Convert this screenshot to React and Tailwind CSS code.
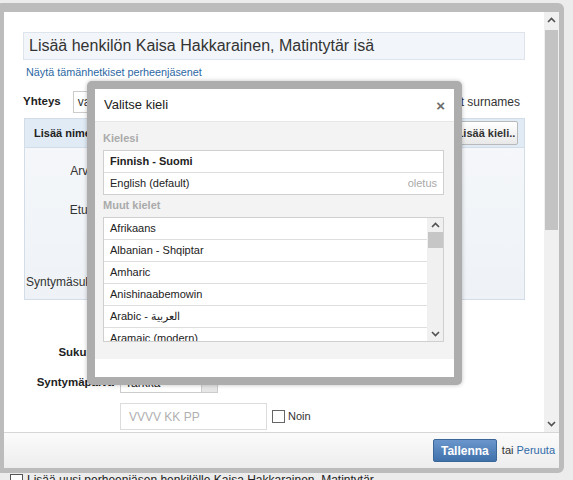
const LANGS = [
  "Afrikaans",
  "Albanian - Shqiptar",
  "Amharic",
  "Anishinaabemowin",
  "Arabic - العربية",
  "Aramaic (modern)",
  "Armenian",
];

function Chevron({ up }) {
  return (
    <svg width="9" height="6" viewBox="0 0 9 6" className="block">
      <polyline
        points={up ? "1,5 4.5,1.5 8,5" : "1,1 4.5,4.5 8,1"}
        fill="none"
        stroke="#505050"
        strokeWidth="1.6"
      />
    </svg>
  );
}

function LanguageDialog() {
  return (
    <div className="absolute left-[87px] top-[81px] flex h-[304px] w-[375px] flex-col rounded-[5px] border-[8px] border-[#adadad] bg-white shadow-[0_0_4px_rgba(0,0,0,0.25)]">
      <div className="flex h-[33px] shrink-0 items-center justify-between border-b border-[#e6e6e6] pl-[9px] pr-[9px]">
        <span className="text-[13px] text-[#222]">Valitse kieli</span>
        <span className="text-[15px] font-bold leading-none text-[#6b6b6b]">×</span>
      </div>
      <div className="flex h-[237px] shrink-0 flex-col bg-[#f3f3f3] px-[8px] pt-[9px]">
        <p className="text-[11px] font-bold leading-[14px] text-[#aaa]">Kielesi</p>
        <div className="mt-[5px] w-[341px] border border-[#cfcfcf] bg-white text-[11px] text-[#222]">
          <div className="flex h-[22px] items-center border-b border-[#dedede] px-[6px] font-bold">
            Finnish - Suomi
          </div>
          <div className="flex h-[21px] items-center justify-between px-[6px]">
            <span>English (default)</span>
            <span className="text-[#aaa]">oletus</span>
          </div>
        </div>
        <p className="mt-[3px] text-[11px] font-bold leading-[14px] text-[#aaa]">Muut kielet</p>
        <div className="mt-[5px] flex h-[125px] w-[341px] overflow-hidden border border-[#cfcfcf] bg-white text-[11px] text-[#222]">
          <div className="flex-1">
            {LANGS.map((lang) => (
              <div
                key={lang}
                className="flex h-[22px] items-center border-b border-[#dedede] px-[6px]"
              >
                {lang}
              </div>
            ))}
          </div>
          <div className="flex w-[16px] flex-col items-center bg-[#f0f0f0]">
            <div className="flex h-[14px] items-center">
              <Chevron up />
            </div>
            <div className="h-[16px] w-[15px] bg-[#c6c6c6]" />
            <div className="flex-1" />
            <div className="flex h-[14px] items-center">
              <Chevron />
            </div>
          </div>
        </div>
      </div>
      <div className="flex-1 bg-white" />
    </div>
  );
}

function FormLabel({ children, bold }) {
  return (
    <div
      className={
        "w-[91px] shrink-0 whitespace-nowrap text-right " +
        (bold ? "text-[11.5px] font-bold" : "text-[12px]")
      }
    >
      {children}
    </div>
  );
}

export default function App() {
  return (
    <div className="relative h-[480px] w-[573px] overflow-hidden bg-[#ececec] font-['Liberation_Sans',Arial,sans-serif] text-[#333]">
      {/* page behind the dialog */}
      <div className="flex items-center gap-[4px] pl-[10px] pt-[473px] text-[12px] text-[#222]">
        <span className="h-[13px] w-[13px] shrink-0 border border-[#555] bg-white" />
        <span className="leading-[14px]">Lisää uusi perheenjäsen henkilölle Kaisa Hakkarainen, Matintytär</span>
      </div>

      {/* outer dialog */}
      <div className="absolute left-[-4px] top-[3px] flex h-[470px] w-[568px] flex-col rounded-[6px] border-b-[5px] border-l-[8px] border-r-[5px] border-t-[9px] border-[#bcbcbc] bg-white">
        <div className="flex h-[420px] shrink-0">
          <div className="flex-1 overflow-hidden pl-[19px] pr-[15px] pt-[20px]">
            <div className="flex h-[28px] w-[502px] items-center border border-[#dde4eb] bg-[#f2f6fa] px-[5px] text-[16px] text-[#333]">
              Lisää henkilön Kaisa Hakkarainen, Matintytär isä
            </div>
            <a className="ml-[3px] mt-[6px] block text-[10.8px] leading-[12px] text-[#2b67a3]">
              Näytä tämänhetkiset perheenjäsenet
            </a>
            <div className="mt-[13px] flex h-[22px] w-[497px] items-center justify-between">
              <div className="flex items-center">
                <span className="text-[11.5px] font-bold text-[#222]">Yhteys</span>
                <div className="ml-[12px] flex h-[22px] w-[200px] items-center border border-[#ccc] bg-white px-[4px] text-[12px] text-[#333]">
                  valitse
                </div>
              </div>
              <div className="flex items-center gap-[4px] text-[12px] text-[#333]">
                <span className="h-[13px] w-[13px] border border-[#777] bg-white" />
                <span>Suggest surnames</span>
              </div>
            </div>

            <div className="ml-px mt-[5px] h-[182px] w-[501px] border border-[#d3dde7] bg-gradient-to-b from-[#f6f8fb] to-[#eef2f6]">
              <div className="flex h-[29px] items-center justify-between border-b border-[#d3dde7] bg-[#e1ebf5] pl-[9px] pr-[6px]">
                <span className="text-[11px] font-bold text-[#222]">Lisää nimen kieliversio</span>
                <button className="h-[24px] w-[64px] whitespace-nowrap rounded-[2px] border border-[#b9b9b9] bg-gradient-to-b from-white to-[#e8e8e8] px-0 text-[11px] font-bold text-[#333]">
                  Lisää kieli..
                </button>
              </div>
              <div className="flex flex-col pl-[1px] pt-[11px] text-[#333]">
                <div className="flex h-[24px] items-center gap-[6px]">
                  <FormLabel>Arvonimi</FormLabel>
                </div>
                <div className="mt-[15px] flex h-[24px] items-center gap-[6px]">
                  <FormLabel>Etunimet</FormLabel>
                </div>
                <div className="mt-[48px] flex h-[24px] items-center gap-[6px]">
                  <FormLabel>Syntymäsukunimi</FormLabel>
                </div>
              </div>
            </div>

            <div className="mt-[42px] flex h-[22px] items-center gap-[6px] text-[#222]">
              <FormLabel bold>Sukupuoli</FormLabel>
              <div className="h-[22px] w-[98px] border border-[#ccc] bg-white" />
            </div>
            <div className="mt-[9px] flex h-[20px] items-center gap-[6px] text-[#222]">
              <FormLabel bold>Syntymäpäivä</FormLabel>
              <div className="flex h-[20px] w-[98px] items-center border border-[#ccc] bg-white text-[12px]">
                <span className="flex-1 px-[4px]">Tarkka</span>
                <span className="h-full w-[16px] border-l border-[#ccc] bg-[#e6e6e6]" />
              </div>
            </div>
            <div className="mt-[10px] flex items-center">
              <div className="w-[97px] shrink-0" />
              <div className="flex h-[27px] w-[147px] items-center border border-[#dcdcdc] bg-white px-[8px] text-[12px] text-[#b0b0b0]">
                VVVV KK PP
              </div>
              <span className="ml-[5px] h-[13px] w-[13px] border border-[#666] bg-white" />
              <span className="ml-[3px] text-[11px] text-[#333]">Noin</span>
            </div>
          </div>

          <div className="flex w-[15px] shrink-0 flex-col items-center bg-[#f0f0f0]">
            <div className="flex h-[16px] items-center">
              <Chevron up />
            </div>
            <div className="mt-[2px] h-[200px] w-[13px] bg-[#c3c3c3]" />
            <div className="flex-1" />
            <div className="flex h-[16px] items-center">
              <Chevron />
            </div>
          </div>
        </div>

        <div className="flex flex-1 items-center justify-end border-t border-[#d6d6d6] bg-gradient-to-b from-[#fbfbfb] to-[#ededed] pr-[4px] text-[11px]">
          <button className="h-[23px] w-[64px] rounded-[2px] border border-[#3b6698] bg-gradient-to-b from-[#6a96cc] to-[#3f71ab] text-[12px] font-bold text-white">
            Tallenna
          </button>
          <span className="ml-[5px] text-[#333]">tai</span>
          <a className="ml-[3px] text-[#2f6aa8]">Peruuta</a>
        </div>
      </div>

      <LanguageDialog />
    </div>
  );
}
